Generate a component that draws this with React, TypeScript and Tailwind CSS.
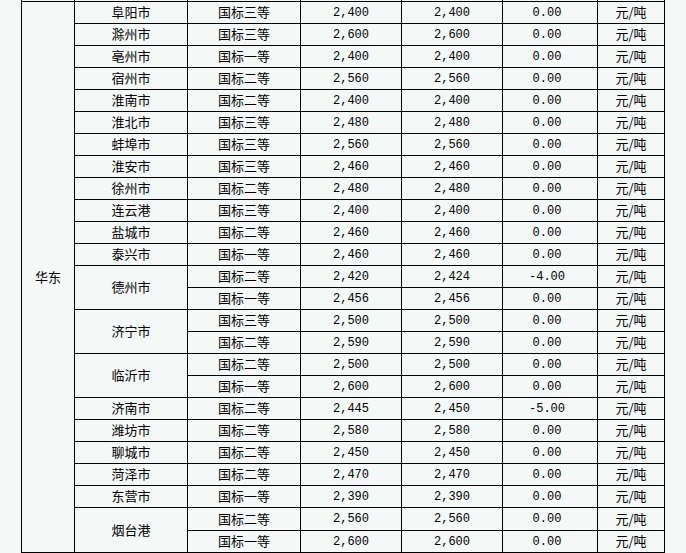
import React from "react";

type Row = { city?: string; span?: number; grade: string; a: string; b: string; d: string };

const rows: Row[] = [
  { city: "阜阳市", grade: "国标三等", a: "2,400", b: "2,400", d: "0.00" },
  { city: "滁州市", grade: "国标三等", a: "2,600", b: "2,600", d: "0.00" },
  { city: "亳州市", grade: "国标一等", a: "2,400", b: "2,400", d: "0.00" },
  { city: "宿州市", grade: "国标二等", a: "2,560", b: "2,560", d: "0.00" },
  { city: "淮南市", grade: "国标二等", a: "2,400", b: "2,400", d: "0.00" },
  { city: "淮北市", grade: "国标三等", a: "2,480", b: "2,480", d: "0.00" },
  { city: "蚌埠市", grade: "国标三等", a: "2,560", b: "2,560", d: "0.00" },
  { city: "淮安市", grade: "国标三等", a: "2,460", b: "2,460", d: "0.00" },
  { city: "徐州市", grade: "国标二等", a: "2,480", b: "2,480", d: "0.00" },
  { city: "连云港", grade: "国标三等", a: "2,400", b: "2,400", d: "0.00" },
  { city: "盐城市", grade: "国标二等", a: "2,460", b: "2,460", d: "0.00" },
  { city: "泰兴市", grade: "国标一等", a: "2,460", b: "2,460", d: "0.00" },
  { city: "德州市", span: 2, grade: "国标二等", a: "2,420", b: "2,424", d: "-4.00" },
  { grade: "国标一等", a: "2,456", b: "2,456", d: "0.00" },
  { city: "济宁市", span: 2, grade: "国标三等", a: "2,500", b: "2,500", d: "0.00" },
  { grade: "国标二等", a: "2,590", b: "2,590", d: "0.00" },
  { city: "临沂市", span: 2, grade: "国标二等", a: "2,500", b: "2,500", d: "0.00" },
  { grade: "国标一等", a: "2,600", b: "2,600", d: "0.00" },
  { city: "济南市", grade: "国标二等", a: "2,445", b: "2,450", d: "-5.00" },
  { city: "潍坊市", grade: "国标二等", a: "2,580", b: "2,580", d: "0.00" },
  { city: "聊城市", grade: "国标二等", a: "2,450", b: "2,450", d: "0.00" },
  { city: "菏泽市", grade: "国标二等", a: "2,470", b: "2,470", d: "0.00" },
  { city: "东营市", grade: "国标一等", a: "2,390", b: "2,390", d: "0.00" },
  { city: "烟台港", span: 2, grade: "国标二等", a: "2,560", b: "2,560", d: "0.00" },
  { grade: "国标一等", a: "2,600", b: "2,600", d: "0.00" },
];

const cell = "bg-[#f4f8f7] flex items-center justify-center overflow-hidden";
const cjk = "font-['Noto_Sans_CJK_SC',sans-serif] text-[13px] leading-none pb-[2px]";
const num = "font-['Liberation_Mono','Noto_Sans_CJK_SC',monospace] text-[12px] leading-none";

export default function App() {
  return (
    <div className="w-[686px] h-[553px] overflow-hidden bg-[#f4f8f7] pl-[21px] text-black">
      <div className="grid w-[644px] grid-cols-[52px_112px_112px_100px_100px_94px_66px] grid-rows-[1px_repeat(23,21px)_22px_21px] gap-px bg-black px-px pb-px">
        {/* previous row, mostly scrolled out of view */}
        <div className={cell} />
        <div className={cell} />
        <div className={cell} />
        <div className={cell} />
        <div className={cell} />
        <div className={cell} />
        <div className={cell} />
        <div className={`${cell} row-span-25 ${cjk}`}>华东</div>
        {rows.map((r, i) => (
          <React.Fragment key={i}>
            {r.city && (
              <div className={`${cell} ${cjk} ${r.span === 2 ? "row-span-2" : ""}`}>{r.city}</div>
            )}
            <div className={`${cell} ${cjk}`}>{r.grade}</div>
            <div className={`${cell} ${num}`}>{r.a}</div>
            <div className={`${cell} ${num}`}>{r.b}</div>
            <div className={`${cell} ${num} pr-[6px]`}>{r.d}</div>
            <div className={`${cell} ${cjk}`}>元/吨</div>
          </React.Fragment>
        ))}
      </div>
    </div>
  );
}
